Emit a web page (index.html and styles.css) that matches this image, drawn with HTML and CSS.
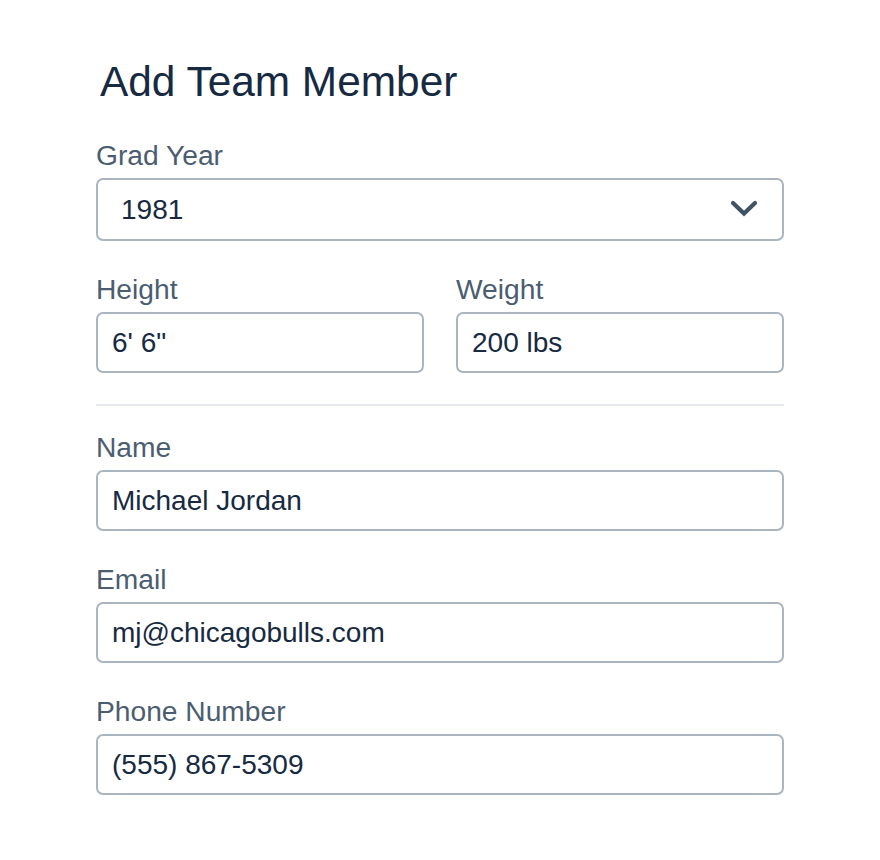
FILE: index.html
```html
<!DOCTYPE html>
<html lang="en">
<head>
<meta charset="utf-8">
<title>Add Team Member</title>
<link rel="stylesheet" href="styles.css">
</head>
<body>
<form class="form">
  <h1 class="title">Add Team Member</h1>

  <div class="field">
    <label class="label" for="grad">Grad Year</label>
    <div class="select-wrap">
      <select class="control select" id="grad">
        <option>1981</option>
      </select>
      <svg class="chevron" width="28" height="18" viewBox="0 0 28 18" aria-hidden="true">
        <polyline points="3,3 14,13.5 25,3" fill="none" stroke="#3f5266" stroke-width="4.2" stroke-linecap="round" stroke-linejoin="miter"/>
      </svg>
    </div>
  </div>

  <div class="row">
    <div class="field">
      <label class="label" for="height">Height</label>
      <input class="control" id="height" type="text" value="6' 6&quot;">
    </div>
    <div class="field">
      <label class="label" for="weight">Weight</label>
      <input class="control" id="weight" type="text" value="200 lbs">
    </div>
  </div>

  <hr class="divider">

  <div class="field">
    <label class="label" for="name">Name</label>
    <input class="control" id="name" type="text" value="Michael Jordan">
  </div>

  <div class="field">
    <label class="label" for="email">Email</label>
    <input class="control" id="email" type="email" value="mj@chicagobulls.com">
  </div>

  <div class="field">
    <label class="label" for="phone">Phone Number</label>
    <input class="control" id="phone" type="tel" value="(555) 867-5309">
  </div>
</form>
</body>
</html>
```

FILE: styles.css
```css
html, body {
  margin: 0;
  padding: 0;
  background: #ffffff;
}

body {
  font-family: "Liberation Sans", Arial, sans-serif;
  color: #1a2b42;
}

.form {
  width: 688px;
  margin: 0 0 0 96px;
  padding-top: 58px;
  display: flex;
  flex-direction: column;
}

.title {
  margin: 0 0 33px 4px;
  font-size: 42.4px;
  line-height: 48px;
  font-weight: 400;
  color: #172a41;
}

.field {
  display: flex;
  flex-direction: column;
  gap: 7px;
  margin-bottom: 32px;
}

.label {
  font-size: 28.2px;
  line-height: 32px;
  color: #4b5d70;
}

.control {
  box-sizing: border-box;
  width: 100%;
  height: 61px;
  margin: 0;
  border: 2px solid #aab5bf;
  border-radius: 7px;
  background: #ffffff;
  padding: 0 14px;
  font-family: "Liberation Sans", Arial, sans-serif;
  font-size: 28px;
  color: #172a41;
  outline: none;
}

.select-wrap {
  position: relative;
}

.select {
  height: 63px;
  appearance: none;
  -webkit-appearance: none;
  padding-left: 23px;
}

.chevron {
  position: absolute;
  right: 26px;
  top: 22px;
  pointer-events: none;
}

.row {
  display: grid;
  grid-template-columns: 1fr 1fr;
  column-gap: 32px;
}

.row .field {
  margin-bottom: 31px;
}

.divider {
  margin: 0 0 25px 0;
  border: 0;
  height: 2px;
  background: #e6eaee;
}
```
